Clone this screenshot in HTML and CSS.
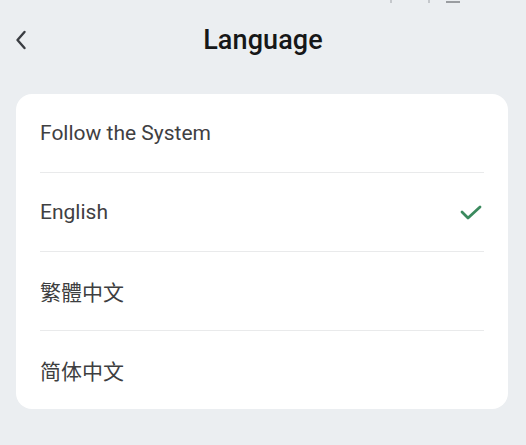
FILE: index.html
```html
<!DOCTYPE html>
<html>
<head>
<meta charset="utf-8">
<link rel="stylesheet" href="styles.css">
</head>
<body>
<div class="status">
  <span class="s-dot"></span>
  <span class="s-dot"></span>
  <span class="s-bar"></span>
</div>
<header class="header">
  <button class="back" aria-label="Back">
    <svg width="12" height="20" viewBox="0 0 12 20"><path d="M9.5 2 L2.5 10 L9.5 18" fill="none" stroke="#3a3d42" stroke-width="2.4" stroke-linecap="round" stroke-linejoin="round"/></svg>
  </button>
  <h1 class="title">Language</h1>
</header>
<main class="card">
  <div class="row"><span class="label">Follow the System</span></div>
  <div class="row"><span class="label">English</span>
    <svg class="check" width="22" height="16" viewBox="0 0 22 16"><path d="M2 8 L8 14 L20 3" fill="none" stroke="#3b8a5e" stroke-width="2.8" stroke-linecap="round" stroke-linejoin="round"/></svg>
  </div>
  <div class="row"><span class="label cjk">繁體中文</span></div>
  <div class="row last"><span class="label cjk">简体中文</span></div>
</main>
</body>
</html>
```
FILE: styles.css
```css
html, body {
  margin: 0;
  padding: 0;
}
body {
  background: #ebeef1;
  font-family: Roboto, "Noto Sans CJK SC", sans-serif;
  width: 526px;
  height: 445px;
  overflow: hidden;
  position: relative;
}
.status {
  position: absolute;
  top: 0;
  left: 390px;
  display: flex;
  align-items: flex-start;
  height: 4px;
}
.s-dot {
  width: 2px;
  height: 3px;
  background: #c5c8cc;
  margin-right: 36px;
}
.s-bar {
  width: 14px;
  height: 2px;
  margin-top: 1px;
  background: #9a9da1;
  margin-left: -20px;
}
.header {
  height: 80px;
  display: flex;
  align-items: center;
  justify-content: center;
  position: relative;
}
.back {
  position: absolute;
  left: 14px;
  top: 29px;
  border: 0;
  background: none;
  padding: 0;
  width: 14px;
  height: 22px;
  display: flex;
  align-items: center;
  justify-content: center;
}
.title {
  margin: 0;
  font-size: 27px;
  font-weight: 500;
  color: #161718;
  letter-spacing: 0.1px;
}
.card {
  margin: 14px 18px 0 16px;
  background: #fff;
  border-radius: 16px;
  padding: 0 24px;
}
.row {
  height: 78px;
  display: flex;
  align-items: center;
  justify-content: space-between;
  border-bottom: 1px solid #e9eaeb;
}
.row.last {
  border-bottom: 0;
}
.label {
  font-size: 21px;
  color: #3f4042;
}
.cjk {
  font-family: "Noto Sans CJK SC", sans-serif;
  font-size: 21px;
  color: #3d3e40;
}
.check {
  margin-right: 2px;
}
```
